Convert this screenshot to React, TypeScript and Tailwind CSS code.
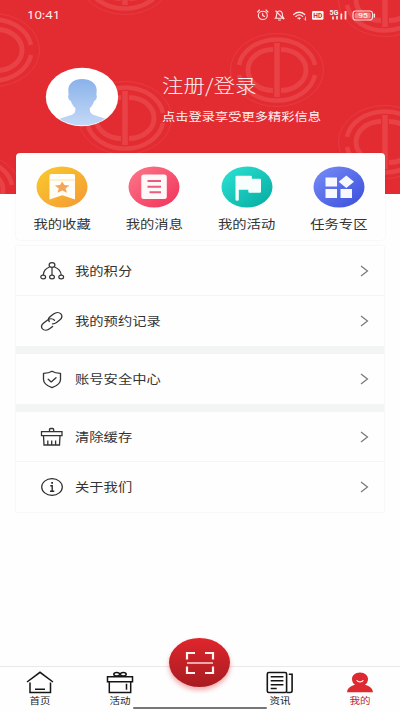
import type { ReactNode } from 'react';

const EMBLEMS = [
  { x: 125, y: -22 },
  { x: 385, y: 0 },
  { x: -7, y: 50 },
  { x: 277, y: 70 },
  { x: 125, y: 118 },
  { x: 385, y: 142 },
  { x: -26, y: 190 },
];

function HeaderPattern() {
  return (
    <svg className="absolute inset-0" width="400" height="194" viewBox="0 0 400 194" fill="none">
      {EMBLEMS.map((e, i) => (
        <g key={i} transform={`translate(${e.x} ${e.y})`} stroke="#e84146">
          <ellipse rx="46.5" ry="36.500" strokeWidth="1" stroke="#e63b40" />
          <path d="M-38 -5A38.500 30.500 0 0 1 38 -5M38 5A38.500 30.500 0 0 1 -38 5" strokeWidth="4.500" />
          <path d="M-4 -20.500A25 20.500 0 0 0 -4 20.500M4 -20.500A25 20.500 0 0 1 4 20.500" strokeWidth="5" />
          <path d="M0 -27V27" strokeWidth="5.500" />
        </g>
      ))}
    </svg>
  );
}

function StatusIcons() {
  return (
    <svg width="120" height="14" viewBox="0 0 120 14" fill="none" stroke="#fbe3e3" strokeWidth="1.1" strokeLinecap="round">
      {/* 闹钟 */}
      <ellipse cx="6.800" cy="7.400" rx="4.500" ry="4.100" />
      <path d="M6.700 5.200v2.400l2 .8M1.500 4l2-2M12 4l-2-2" />
      {/* 静音 */}
      <path d="M19.500 10.200h8.200c-1.300-1.200-1.200-2-1.300-3.600C26.200 3.800 25.100 3 23.500 3s-2.700.800-2.900 3.600c-.1 1.600 0 2.400-1.100 3.600zM22.500 12h2M19.800 3l7.800 7.800" />
      {/* WiFi */}
      <path d="M37.700 6.500c3.300-3 7.800-3 11 0M39.800 8.400c2.200-1.900 4.800-1.900 6.800 0" strokeWidth="1.300" />
      <path d="M41.800 10.100l1.500 1.500 1.300-1.500c-.900-.700-1.900-.700-2.800 0z" fill="#fbe3e3" strokeWidth="0.500" />
      <path d="M49.500 9v3M48.300 10.800l1.200 1.200" strokeWidth="0.800" />
      {/* HD */}
      <rect x="56" y="3" width="11.500" height="8.700" rx="1.200" fill="#fff5f4" stroke="none" />
      <text x="57.300" y="10" fontSize="7.200" fontWeight="700" fontFamily="Roboto, sans-serif" fill="#d8282d" stroke="none" textLength="9" lengthAdjust="spacingAndGlyphs">HD</text>
      {/* 信号 */}
      <text x="73.500" y="6.800" fontSize="6.500" fontWeight="700" fontFamily="Roboto, sans-serif" fill="#fff1f0" stroke="none" textLength="9" lengthAdjust="spacingAndGlyphs">5G</text>
      <path d="M77 8.500v3M81 8v3.500M85.300 5.500v6M89.500 3v8.500" strokeWidth="1.700" strokeLinecap="butt" />
      {/* 电池 */}
      <rect x="97" y="3" width="19.500" height="9" rx="2.800" />
      <rect x="98.700" y="4.600" width="16" height="5.800" rx="1.600" fill="#ee8384" stroke="none" />
      <path d="M118.300 6.200v2.700" strokeWidth="1.500" />
      <text x="102.300" y="10.100" fontSize="7.200" fontFamily="Roboto, sans-serif" fill="#fff" stroke="none" textLength="9.500" lengthAdjust="spacingAndGlyphs">95</text>
    </svg>
  );
}

function Avatar() {
  return (
    <svg width="74" height="60" viewBox="0 0 74 60">
      <defs>
        <linearGradient id="person" x1="0" y1="0" x2="0" y2="1">
          <stop offset="0" stopColor="#8ab2ea" />
          <stop offset="1" stopColor="#c6daf7" />
        </linearGradient>
        <clipPath id="avatarClip">
          <ellipse cx="37" cy="30" rx="35.500" ry="28.500" />
        </clipPath>
      </defs>
      <ellipse cx="37" cy="30" rx="36.200" ry="29.200" fill="#fff" />
      <path
        clipPath="url(#avatarClip)"
        fill="url(#person)"
        d="M37 12c-8 0-13.700 4.500-13.700 11 0 1.700.100 3.300.400 4.700-1.300 1.300-.200 5.300 2.100 6.300 1 3 2.900 5.700 4.700 7.300-.100 2.200-.300 3.700-1.200 4.700-2.300 2.700-7.800 2.900-14.300 5.800v8.200h45v-8.200c-6.500-2.900-11.800-3.100-14.100-5.800-.900-1-1.100-2.500-1.200-4.700 1.800-1.600 3.500-4.300 4.500-7.300 2.300-1 3.400-5 2.100-6.300.300-1.400.400-3 .400-4.700C51.700 16.500 45.500 12 37 12z"
      />
    </svg>
  );
}

const SHORTCUTS: { label: string; from: string; to: string; art: ReactNode }[] = [
  {
    label: '我的收藏',
    from: '#f9c62d',
    to: '#f59d33',
    art: (
      <>
        <path d="M13.500 9.500q0-1.500 1.500-1.500h22.500q1.500 0 1.500 1.500v24l-12.700-4.200-12.800 4.200z" fill="#fffdf5" />
        <path d="M14 14h24.500" stroke="#f8dc9c" strokeWidth="0.800" />
        <path d="M26.200 15.500l2.200 3.600 5.100.400-3.900 2.900 1.400 4.300-4.800-2.200-4.700 2.200 1.300-4.300-3.900-2.900 5.100-.400z" fill="#f3a65c" />
      </>
    ),
  },
  {
    label: '我的消息',
    from: '#fb7285',
    to: '#f2385f',
    art: (
      <>
        <rect x="13.300" y="8.500" width="25.500" height="24.500" rx="2.500" fill="#fff8f9" />
        <path d="M19.500 15h13.500M19.500 20.700h13.500M21.500 26.300h11.500" stroke="#e75d80" strokeWidth="2" />
      </>
    ),
  },
  {
    label: '我的活动',
    from: '#28ded0',
    to: '#08b0a4',
    art: <path d="M14.500 11q0-1.200 1.300-1.200h14q1 0 1 1v2h8q1.200 0 1.200 1.200v11.500q0 1.200-1.200 1.200H28.500q-1.200 0-1.200-1.200v-1.800h-9.500v10q0 1-1.600 1t-1.700-1z" fill="#f6fffe" />,
  },
  {
    label: '任务专区',
    from: '#7287f4',
    to: '#3f54dd',
    art: (
      <path d="M12.500 11.500h11.500v9H12.500zM12.500 23h11.500v9H12.500zM27.500 23h11.500v9H27.500zM33.300 9.500l7.700 6.300-7.700 6.200-7.600-6.200z" fill="#f7f9ff" />
    ),
  },
];

const PointsIcon = () => (
  <svg className="shrink-0" width="26" height="20" viewBox="0 0 26 20" fill="none" stroke="#333" strokeWidth="1.200">
    <ellipse cx="13" cy="4" rx="2.900" ry="2.400" />
    <ellipse cx="4.200" cy="16" rx="2.400" ry="1.900" />
    <ellipse cx="13" cy="16" rx="2.400" ry="1.900" />
    <ellipse cx="22.200" cy="16" rx="2.400" ry="1.900" />
    <path d="M13 6.500v7.500M10.500 6C6.500 7.500 4.500 10 4.200 14M15.500 6c4 1.500 6.300 4 6.700 8" />
  </svg>
);

const LinkIcon = () => (
  <svg width="24" height="20" viewBox="0 0 24 20" fill="none" stroke="#333" strokeWidth="1.300" strokeLinecap="round">
    <path d="M9.300 10.500c-1.300-1.800-.800-3.600 1-5l3.200-2.500c2.500-1.900 5.700-1.900 7.400-.1 1.700 1.900 1.200 4.300-1.200 6.200l-3.200 2.500c-1.200.9-2.600 1.400-4 1.300" />
    <path d="M14.500 9.300c-1.700-1.900-4.800-1.900-7.200-.1l-3.600 2.700c-2.400 1.800-2.900 4.200-1.200 6 1.700 1.700 4.900 1.600 7.400-.300l2.700-2.200" />
  </svg>
);

const ShieldIcon = () => (
  <svg width="20" height="19" viewBox="0 0 20 19" fill="none" stroke="#333" strokeWidth="1.300" strokeLinecap="round" strokeLinejoin="round">
    <path d="M10 1.300C7.500 3 4.500 3.300 1.500 3.300V9.500c0 4 4 6.500 8.500 8.200 4.500-1.700 8.500-4.200 8.500-8.200V3.300C15.500 3.300 12.500 3 10 1.300z" />
    <path d="M6.200 9.200l3 2.700 4.800-4.200" />
  </svg>
);

const BasketIcon = () => (
  <svg width="24" height="20" viewBox="0 0 24 20" fill="none" stroke="#333" strokeWidth="1.300">
    <path d="M9.500 4.500V2.700q0-1.200 1.200-1.200h1.800q1.200 0 1.200 1.200v1.800M1.500 4.600h20.500v4H1.500zM3.500 8.600l.5 9.400h15.500l.5-9.400M7.800 17.500v-4M11.700 17.500v-4M15.600 17.500v-4" />
  </svg>
);

const InfoIcon = () => (
  <svg width="22" height="18" viewBox="0 0 22 18" fill="none" stroke="#2b2b2b" strokeWidth="1.200">
    <ellipse cx="11" cy="9" rx="10.300" ry="8.300" />
    <path d="M9.300 7.700h1.900v5.600M9 13.300h4.300" strokeWidth="1.400" />
    <path d="M10.200 4.800h1.800" strokeWidth="1.700" />
  </svg>
);

const GROUPS = [
  [
    { label: '我的积分', icon: <PointsIcon /> },
    { label: '我的预约记录', icon: <LinkIcon /> },
  ],
  [{ label: '账号安全中心', icon: <ShieldIcon /> }],
  [
    { label: '清除缓存', icon: <BasketIcon /> },
    { label: '关于我们', icon: <InfoIcon /> },
  ],
];

const TABS = [
  {
    label: '首页',
    icon: <path d="M1 11L14 1.300 27 11M4 11.500V21.500h20.500V11.500M9 18.300h10" stroke="#151515" strokeWidth="1.500" />,
  },
  {
    label: '活动',
    icon: (
      <g stroke="#151515" strokeWidth="1.500">
        <path d="M1.500 5.700h25v5h-25zM3.300 10.700v10.800h21.400V10.700M20.500 12.700v6" />
        <ellipse cx="10.700" cy="3.200" rx="2.900" ry="1.800" />
        <ellipse cx="17.300" cy="3.200" rx="2.900" ry="1.800" />
      </g>
    ),
  },
  { label: '', icon: null },
  {
    label: '资讯',
    icon: (
      <g stroke="#151515" strokeWidth="1.600">
        <rect x="1.300" y="1.500" width="19.300" height="20" rx="1.500" />
        <path d="M20.600 21.500h3.500q2 0 2-1.700V3.300h-3.300M4.700 5.700h12.700M4.700 9.700h12.700M4.700 13.700h12.700M4.700 17.500h6" />
      </g>
    ),
  },
  {
    label: '我的',
    active: true,
    icon: (
      <>
        <path d="M14 1.500c-5 0-8 3-8 6.600 0 2.600 1.200 4.500 3 5.700C5 14.800 1.500 17 1 21.200h26c-.500-4.200-4-6.400-8-7.400 1.800-1.200 3-3.100 3-5.700 0-3.600-3-6.600-8-6.600z" fill="#dc2a30" />
        <path d="M10.700 9.200c1.400 2.200 5.200 2.200 6.600 0" stroke="#fff" strokeWidth="1.200" />
      </>
    ),
  },
];

export default function App() {
  return (
    <div className="flex h-[711px] w-[400px] flex-col overflow-hidden bg-[#fefefe] font-['Noto_Sans','Noto_Sans_CJK_SC',sans-serif] text-[#333]">
      {/* 顶部红色区域 */}
      <header className="relative h-[194px] shrink-0 overflow-hidden bg-[#e32c31] text-[#fff3f2]">
        <HeaderPattern />
        <div className="relative flex h-[30px] items-center justify-between pr-6 pl-[27px]">
          <span className="scale-y-88 text-[13px] leading-none">10:41</span>
          <StatusIcons />
        </div>
        <div className="relative flex pt-[37px] pl-[45px]">
          <Avatar />
          <div className="pl-[43px]">
            <h1 className="scale-y-88 pt-1 font-['Noto_Sans_CJK_SC',sans-serif] text-[21.5px] leading-7 font-light whitespace-nowrap">注册/登录</h1>
            <p className="scale-y-85 pt-2 font-['Noto_Sans_CJK_SC',sans-serif] text-[13.25px] leading-5 whitespace-nowrap">点击登录享受更多精彩信息</p>
          </div>
        </div>
      </header>

      {/* 快捷入口 */}
      <section className="relative mx-auto -mt-[41px] grid h-[87px] w-[369px] shrink-0 grid-cols-4 rounded bg-[#fefefe] pt-[13px] shadow-[0_0_2px_rgba(0,0,0,0.08)]">
        {SHORTCUTS.map((s, i) => (
          <div key={s.label} className="flex flex-col items-center pl-px">
            <svg width="52" height="42" viewBox="0 0 52 42" fill="none">
              <defs>
                <linearGradient id={`shortcut${i}`} x1="0" y1="0" x2="1" y2="1">
                  <stop offset="0.100" stopColor={s.from} />
                  <stop offset="0.900" stopColor={s.to} />
                </linearGradient>
              </defs>
              <ellipse cx="26" cy="21" rx="25.500" ry="20.500" fill={`url(#shortcut${i})`} />
              {s.art}
            </svg>
            <span className="mt-1.5 scale-y-85 font-['Noto_Sans_CJK_SC',sans-serif] text-[14.3px] leading-5">{s.label}</span>
          </div>
        ))}
      </section>

      {/* 功能列表 */}
      <main className="mx-auto mt-[6px] flex w-[368px] shrink-0 flex-col gap-2 bg-[#f3f4f4] shadow-[0_0_2px_rgba(0,0,0,0.08)]">
        {GROUPS.map((rows, g) => (
          <div key={g} className="divide-y divide-[#f5f5f5] bg-[#fefefe]">
            {rows.map(row => (
              <div key={row.label} className="flex h-[50px] items-center pr-[15px] pl-6">
                <span className="flex w-6 shrink-0 justify-center">{row.icon}</span>
                <span className="flex-1 scale-y-85 pl-[11px] font-['Noto_Sans_CJK_SC',sans-serif] text-[14.3px] leading-5">{row.label}</span>
                <svg width="9" height="12" viewBox="0 0 9 12" fill="none" stroke="#777" strokeWidth="1.200">
                  <path d="M1 1l6.500 5L1 11" />
                </svg>
              </div>
            ))}
          </div>
        ))}
      </main>

      {/* 底部导航 */}
      <nav className="relative mt-auto grid h-[45px] shrink-0 grid-cols-5 border-t border-[#e9e9e9]">
        {TABS.map((t, i) => (
          <div key={i} className="flex flex-col items-center pt-1">
            <svg width="28" height="23" viewBox="0 0 28 23" fill="none">{t.icon}</svg>
            <span className={`-mt-px scale-y-85 font-['Noto_Sans_CJK_SC',sans-serif] text-[10.5px] leading-4 ${t.active ? 'text-[#b52a30]' : 'text-[#222]'}`}>{t.label}</span>
          </div>
        ))}
        <div className="absolute -top-[29px] left-[169px] flex h-[49px] w-[61px] items-center justify-center rounded-[50%] bg-linear-to-b from-[#de262c] to-[#a81c21] shadow-[0_3px_5px_rgba(225,40,50,0.4)]">
          <svg width="30" height="24" viewBox="0 0 30 24" fill="none" stroke="#fff3f2" strokeWidth="2.200">
            <path d="M10 2H2v6.500M20 2h8v6.500M10 22H2v-6.500M20 22h8v-6.500" />
            <path d="M2 12h26" strokeWidth="1.300" />
          </svg>
        </div>
        <div className="absolute bottom-0.5 left-[133px] h-[2px] w-[134px] rounded-full bg-[#777]" />
      </nav>
    </div>
  );
}
